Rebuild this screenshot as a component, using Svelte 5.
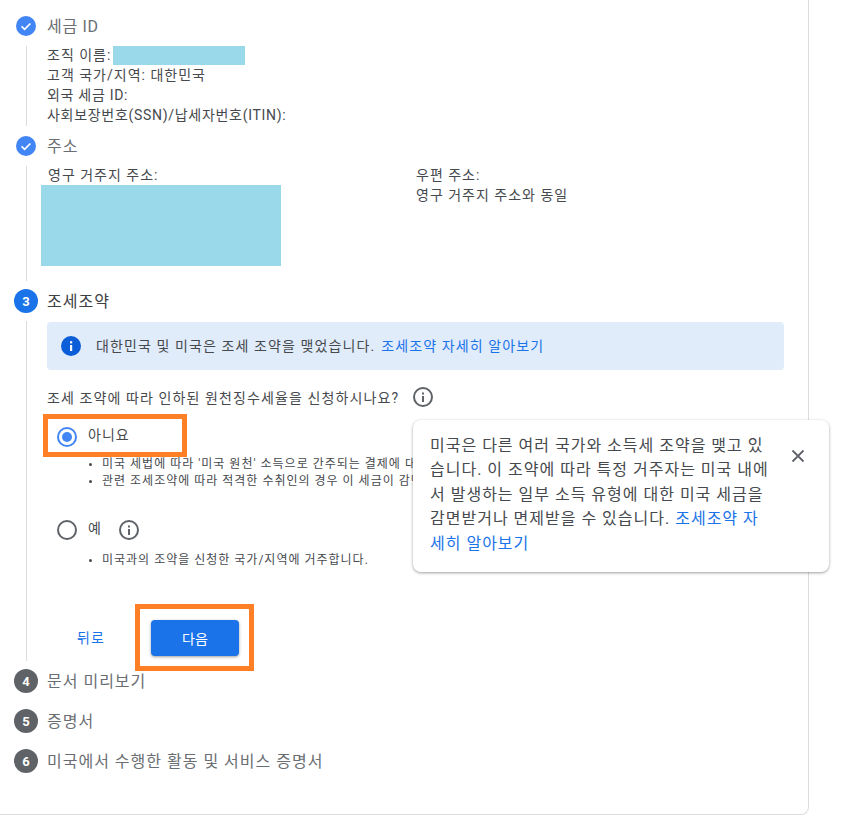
<script>
  const idLines = [
    { text: "고객 국가/지역: 대한민국", tight: false },
    { text: "외국 세금 ID:", tight: true },
    { text: "사회보장번호(SSN)/납세자번호(ITIN):", tight: true }
  ];
  const laterSteps = [
    { n: 4, label: "문서 미리보기" },
    { n: 5, label: "증명서" },
    { n: 6, label: "미국에서 수행한 활동 및 서비스 증명서" }
  ];
</script>

{#snippet check()}
  <svg class="done" viewBox="0 0 20 20" width="20" height="20">
    <circle cx="10" cy="10" r="10" fill="#4285f4" />
    <path d="M5.6 10.3l3 3 5.8-5.8" fill="none" stroke="#fff" stroke-width="1.7" />
  </svg>
{/snippet}

{#snippet info()}
  <svg viewBox="0 0 20 20" width="20" height="20">
    <circle cx="10" cy="10" r="9" fill="none" stroke="#5f6368" stroke-width="2" />
    <rect x="9" y="9" width="2" height="6" fill="#5f6368" />
    <rect x="9" y="5.5" width="2" height="2" fill="#5f6368" />
  </svg>
{/snippet}

<div class="card">
  <div class="stepHead first">
    <span class="slot">{@render check()}</span>
    <h2 class="tight">세금 ID</h2>
  </div>
  <div class="stepBody idBody">
    <div class="row">조직 이름:<span class="mask orgMask"></span></div>
    {#each idLines as line}
      <div class="row" class:tight={line.tight}>{line.text}</div>
    {/each}
  </div>

  <div class="stepHead">
    <span class="slot">{@render check()}</span>
    <h2>주소</h2>
  </div>
  <div class="stepBody addrBody">
    <div class="addrCol">
      <div class="row">영구 거주지 주소:</div>
      <div class="mask addrMask"></div>
    </div>
    <div class="addrCol2">
      <div class="row">우편 주소:</div>
      <div class="row">영구 거주지 주소와 동일</div>
    </div>
  </div>

  <div class="stepHead current">
    <span class="slot"><span class="num active">3</span></span>
    <h2>조세조약</h2>
  </div>
  <div class="stepBody treatyBody">
    <div class="banner">
      <svg viewBox="0 0 20 20" width="20" height="20">
        <circle cx="10" cy="10" r="10" fill="#0b5ed7" />
        <rect x="9" y="9" width="2.2" height="6" fill="#fff" />
        <rect x="9" y="5.2" width="2.2" height="2.2" fill="#fff" />
      </svg>
      <span>대한민국 및 미국은 조세 조약을 맺었습니다.</span>
      <a href="#treaty">조세조약 자세히 알아보기</a>
    </div>

    <div class="question">
      <span>조세 조약에 따라 인하된 원천징수세율을 신청하시나요?</span>
      {@render info()}
    </div>

    <div class="option no">
      <span class="radio on"><span></span></span>
      <span class="optLabel">아니요</span>
    </div>
    <ul class="notes">
      <li>미국 세법에 따라 '미국 원천' 소득으로 간주되는 결제에 대해</li>
      <li>관련 조세조약에 따라 적격한 수취인의 경우 이 세금이 감면</li>
    </ul>

    <div class="option yes">
      <span class="radio"></span>
      <span class="optLabel">예</span>
      {@render info()}
    </div>
    <ul class="notes second">
      <li>미국과의 조약을 신청한 국가/지역에 거주합니다.</li>
    </ul>

    <div class="actions">
      <a href="#back" class="back">뒤로</a>
      <button>다음</button>
    </div>
  </div>

  {#each laterSteps as step}
    <div class="stepHead later">
      <span class="slot"><span class="num">{step.n}</span></span>
      <h2>{step.label}</h2>
    </div>
  {/each}

  <div class="tip">
    <p>미국은 다른 여러 국가와 소득세 조약을 맺고 있습니다. 이 조약에 따라 특정 거주자는 미국 내에서 발생하는 일부 소득 유형에 대한 미국 세금을 감면받거나 면제받을 수 있습니다. <a href="#treaty">조세조약 자세히 알아보기</a></p>
    <svg class="close" viewBox="0 0 14 14" width="14" height="14">
      <path d="M1.5 1.5l11 11M12.5 1.5l-11 11" stroke="#5f6368" stroke-width="1.8" fill="none" />
    </svg>
  </div>

  <div class="mark markNo"></div>
  <div class="mark markNext"></div>
</div>

<style>
  :global(body) {
    background: #fff;
  }
  .card {
    position: relative;
    box-sizing: border-box;
    width: 809px;
    height: 815px;
    border-right: 1px solid #dadce0;
    border-bottom: 1px solid #dadce0;
    border-bottom-right-radius: 8px;
    padding-top: 6px;
    font-family: Roboto, "Noto Sans CJK KR", sans-serif;
    font-size: 14px;
    letter-spacing: 1px;
    color: #46494d;
  }
  .stepHead {
    display: flex;
    align-items: center;
    height: 40px;
    padding-left: 14px;
  }
  .slot {
    display: flex;
    justify-content: center;
    align-items: center;
    width: 24px;
    margin-right: 9px;
  }
  h2 {
    margin: 0;
    padding-bottom: 2px;
    font-size: 16px;
    font-weight: 400;
    color: #6a6e72;
  }
  .current h2 {
    color: #3c4043;
  }
  .tight {
    letter-spacing: 0.7px;
  }
  .num {
    display: flex;
    justify-content: center;
    align-items: center;
    width: 24px;
    height: 24px;
    border-radius: 50%;
    background: #5f6368;
    color: #fff;
    font-size: 13px;
    font-weight: 700;
    letter-spacing: 0;
  }
  .num.active {
    background: #1a73e8;
  }
  .stepBody {
    margin-left: 26px;
    border-left: 1px solid #dadce0;
    padding-left: 20px;
  }
  .row {
    height: 20px;
    line-height: 18px;
    white-space: nowrap;
  }
  .idBody {
    height: 80px;
  }
  .mask {
    background: #9ad9ea;
  }
  .orgMask {
    display: inline-block;
    width: 132px;
    height: 19px;
    margin-left: 2px;
    vertical-align: top;
  }
  .addrBody {
    display: flex;
    height: 115px;
  }
  .addrCol {
    width: 369px;
  }
  .addrCol .row {
    height: 19px;
    padding-left: 1px;
  }
  .addrMask {
    width: 240px;
    height: 81px;
    margin-left: -6px;
  }
  .treatyBody {
    height: 340px;
    padding-top: 1px;
    box-sizing: border-box;
  }
  .banner {
    display: flex;
    align-items: center;
    box-sizing: border-box;
    width: 737px;
    height: 48px;
    padding-left: 14px;
    background: #e1ecfb;
    border-radius: 4px;
    letter-spacing: 1.1px;
  }
  .banner svg {
    margin-right: 15px;
  }
  .banner span,
  .banner a {
    padding-bottom: 2px;
  }
  .banner a {
    margin-left: 6px;
  }
  a {
    color: #1a73e8;
    text-decoration: none;
  }
  .question {
    display: flex;
    align-items: center;
    gap: 14px;
    margin-top: 16px;
    height: 22px;
    letter-spacing: 1.1px;
  }
  .option {
    display: flex;
    align-items: center;
    height: 20px;
    margin-left: 10px;
  }
  .option.no {
    margin-top: 19px;
  }
  .option.yes {
    margin-top: 30px;
  }
  .radio {
    display: flex;
    justify-content: center;
    align-items: center;
    box-sizing: border-box;
    width: 20px;
    height: 20px;
    border: 2px solid #5f6368;
    border-radius: 50%;
    margin-right: 11px;
  }
  .radio.on {
    border-color: #4285f4;
  }
  .radio.on span {
    width: 10px;
    height: 10px;
    border-radius: 50%;
    background: #4285f4;
  }
  .optLabel {
    padding-bottom: 6px;
  }
  .yes .optLabel {
    margin-right: 17px;
  }
  .notes {
    margin: 9px 0 0;
    padding-left: 55px;
    font-size: 12px;
    line-height: 17px;
    white-space: nowrap;
  }
  .notes li::marker {
    font-size: 10px;
  }
  .notes.second {
    margin-top: 12px;
  }
  .actions {
    display: flex;
    align-items: center;
    margin-top: 51px;
    padding-left: 30px;
  }
  .back {
    width: 74px;
    padding-bottom: 3px;
  }
  button {
    width: 88px;
    height: 36px;
    border: none;
    border-radius: 4px;
    background: #1a73e8;
    color: #fff;
    font: inherit;
    letter-spacing: 0;
    box-shadow: 0 1px 3px rgba(60, 64, 67, 0.5);
  }
  .tip {
    position: absolute;
    left: 413px;
    top: 420px;
    box-sizing: border-box;
    width: 416px;
    height: 152px;
    padding: 14px 56px 0 17px;
    background: #fff;
    border-radius: 8px;
    box-shadow: 0 1px 3px rgba(60, 64, 67, 0.5);
  }
  .tip p {
    margin: 0;
    font-size: 16px;
    line-height: 24.4px;
    word-break: break-all;
  }
  .close {
    position: absolute;
    right: 24px;
    top: 29px;
  }
  .mark {
    position: absolute;
    box-sizing: border-box;
    border: 5px solid #ff7f27;
  }
  .markNo {
    left: 43px;
    top: 414px;
    width: 144px;
    height: 43px;
  }
  .markNext {
    left: 135px;
    top: 604px;
    width: 119px;
    height: 67px;
  }
</style>
